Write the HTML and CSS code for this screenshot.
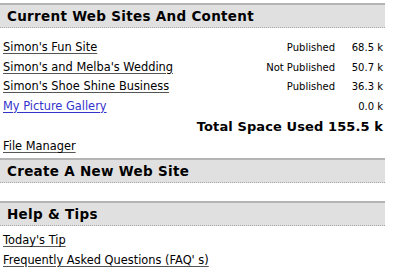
FILE: index.html
```html
<!DOCTYPE html>
<html>
<head>
<meta charset="utf-8">
<link rel="stylesheet" href="styles.css">
</head>
<body>
<div class="page">
  <div class="section-head">Current Web Sites And Content</div>
  <div class="sites">
    <a class="link" href="#">Simon's Fun Site</a><span class="status">Published</span><span class="size">68.5 k</span>
    <a class="link" href="#">Simon's and Melba's Wedding</a><span class="status">Not Published</span><span class="size">50.7 k</span>
    <a class="link" href="#">Simon's Shoe Shine Business</a><span class="status">Published</span><span class="size">36.3 k</span>
    <a class="link blue" href="#">My Picture Gallery</a><span class="status"></span><span class="size">0.0 k</span>
    <div class="total">Total Space Used 155.5 k</div>
  </div>
  <a class="link solo" href="#">File Manager</a>
  <div class="section-head">Create A New Web Site</div>
  <div class="section-head third">Help &amp; Tips</div>
  <div class="help">
    <a class="link" href="#">Today's Tip</a>
    <a class="link" href="#">Frequently Asked Questions (FAQ' s)</a>
  </div>
</div>
</body>
</html>
```
FILE: styles.css
```css
html, body { margin: 0; padding: 0; background: #fff; }
body { font-family: "DejaVu Sans", Verdana, sans-serif; font-size: 11px; color: #000; }
.page { width: 385px; padding-top: 3px; }
.section-head {
  background: #e0e0e0;
  border-top: 2px solid #b4b4b4;
  border-bottom: 1px dotted #a8a8a8;
  font-weight: bold;
  font-size: 13.5px;
  letter-spacing: 0.3px;
  height: 22px;
  line-height: 23px;
  padding-left: 7px;
}
.sites {
  display: grid;
  grid-template-columns: 1fr auto 48px;
  margin-top: 10px;
  padding-left: 3px;
  padding-right: 2px;
}
.sites > * { line-height: 19.5px; height: 19.5px; }
.status, .size { text-align: right; font-size: 10px; }
.link { color: #000; font-size: 11.4px; text-decoration: underline; text-decoration-color: #555; text-underline-offset: 2px; }
.link.blue { color: #3333cc; text-decoration-color: #3333cc; }
.total { grid-column: 1 / 4; text-align: right; font-weight: bold; font-size: 13px; letter-spacing: 0.1px; line-height: 22px; height: 22px; }
.solo { display: block; margin-left: 3px; line-height: 17px; margin-bottom: 3px; }
.third { margin-top: 18px; }
.help { display: flex; flex-direction: column; padding-left: 3px; margin-top: 5px; }
.help .link { line-height: 19.5px; }
```
